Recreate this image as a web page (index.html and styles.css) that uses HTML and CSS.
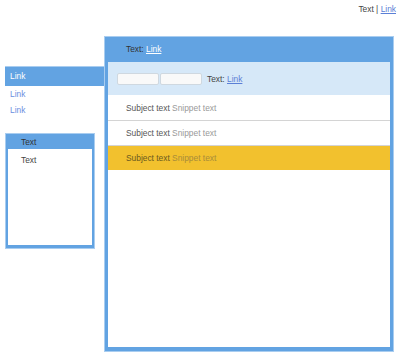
FILE: index.html
```html
<!DOCTYPE html>
<html>
<head>
<meta charset="utf-8">
<link rel="stylesheet" href="styles.css">
</head>
<body>
<div class="topbar"><span class="muted">Text</span> <span class="sep">|</span> <a href="#" class="link">Link</a></div>
<div class="layout">
  <div class="sidebar">
    <div class="nav-active">Link</div>
    <a href="#" class="nav-link">Link</a>
    <a href="#" class="nav-link">Link</a>
    <div class="box">
      <div class="box-head">Text</div>
      <div class="box-body">Text</div>
    </div>
  </div>
  <div class="main">
    <div class="main-head">Text: <a href="#" class="head-link">Link</a></div>
    <div class="main-body">
      <div class="toolbar">
        <input class="field" type="text">
        <input class="field" type="text">
        <span class="tool-text">Text: <a href="#" class="link">Link</a></span>
      </div>
      <div class="row"><span class="subject">Subject text</span> <span class="snippet">Snippet text</span></div>
      <div class="row"><span class="subject">Subject text</span> <span class="snippet">Snippet text</span></div>
      <div class="row row-selected"><span class="subject">Subject text</span> <span class="snippet">Snippet text</span></div>
    </div>
  </div>
</div>
</body>
</html>
```
FILE: styles.css
```css
html, body {
  margin: 0;
  padding: 0;
  background: #fff;
}
body {
  font-family: "Liberation Sans", Arial, sans-serif;
  font-size: 8.4px;
  color: #444;
  width: 400px;
  height: 356px;
  overflow: hidden;
}
a { text-decoration: underline; }
.link { color: #5b7fd6; }
.topbar {
  height: 36px;
  box-sizing: border-box;
  padding: 4px 4px 0 0;
  line-height: 10px;
  text-align: right;
  color: #444;
}
.sep { color: #444; }
.layout {
  display: flex;
  padding-left: 5px;
}
.sidebar {
  width: 99px;
  padding-top: 30px;
  display: flex;
  flex-direction: column;
}
.nav-active {
  height: 20px;
  box-sizing: border-box;
  background: #62a3e2;
  border-top: 1px solid #a9cdf0;
  color: #fff;
  line-height: 19px;
  padding-left: 5px;
}
.nav-link {
  display: block;
  color: #6b8ee0;
  text-decoration: none;
  line-height: 16px;
  padding-left: 5px;
}
.box {
  margin-top: 15px;
  width: 90px;
  height: 116px;
  box-sizing: border-box;
  background: #62a3e2;
  border: 1px solid #a9cdf0;
  padding: 0 2px 3px 2px;
  display: flex;
  flex-direction: column;
}
.box-head {
  height: 15px;
  line-height: 17px;
  padding-left: 13px;
  color: #333;
}
.box-body {
  flex: 1;
  background: #fff;
  padding: 5px 0 0 13px;
  line-height: 12px;
}
.main {
  width: 290px;
  height: 316px;
  box-sizing: border-box;
  background: #62a3e2;
  border: 1px solid #a9cdf0;
  padding: 0 3px 4px 3px;
  display: flex;
  flex-direction: column;
}
.main-head {
  height: 25px;
  line-height: 24px;
  padding-left: 18px;
  color: #333;
}
.head-link { color: #fff; }
.main-body {
  flex: 1;
  background: #fff;
}
.toolbar {
  height: 34px;
  background: #d6e8f8;
  display: flex;
  align-items: center;
  padding-left: 9px;
  gap: 1px;
  border-bottom: 1px solid #fff;
  box-sizing: border-box;
}
.field {
  width: 42px;
  height: 12px;
  box-sizing: border-box;
  border: 1px solid #cfd8e0;
  border-radius: 2px;
  background: #f9f9f9;
  margin: 0;
  padding: 0;
}
.tool-text {
  margin-left: 4px;
  color: #444;
}
.row {
  height: 24px;
  line-height: 24px;
  padding-left: 18px;
  border-bottom: 1px solid #d4d4d4;
}
.subject { color: #555; }
.snippet { color: #999; }
.row-selected {
  background: #f2c12e;
  border-bottom: none;
}
.row-selected .subject { color: #6a5a20; }
.row-selected .snippet { color: #a88c3a; }
```
